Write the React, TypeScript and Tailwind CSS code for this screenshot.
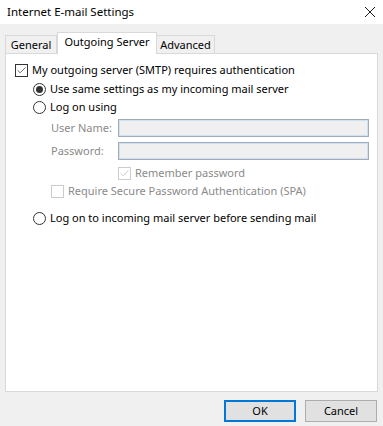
import { Check } from "lucide-react"

function CheckBox({ checked, disabled }: { checked?: boolean; disabled?: boolean }) {
  return (
    <span
      className={`flex h-[13px] w-[13px] shrink-0 items-center justify-center border bg-white ${
        disabled ? "border-[#cccccc]" : "border-[#333333]"
      }`}
    >
      {checked && (
        <Check
          className={`h-[11px] w-[11px] ${disabled ? "text-[#bcbcbc]" : "text-[#333333]"}`}
          strokeWidth={1.6}
        />
      )}
    </span>
  )
}

function Radio({ checked }: { checked?: boolean }) {
  return (
    <span className="flex h-[13px] w-[13px] shrink-0 items-center justify-center rounded-full border border-[#333333] bg-white">
      {checked && <span className="h-[7px] w-[7px] rounded-full bg-[#333333]" />}
    </span>
  )
}

export default function App() {
  return (
    <div
      className="flex h-[426px] w-[383px] flex-col bg-[#f0f0f0] text-[11px] text-black"
      style={{ fontFamily: "'Noto Sans', 'Open Sans', sans-serif" }}
    >
      {/* title bar */}
      <div className="flex h-[24px] items-center justify-between bg-white pl-[7px] pr-[6px]">
        <span className="text-[11.5px] leading-none">Internet E-mail Settings</span>
        <svg width="12" height="12" viewBox="0 0 12 12" className="mr-[1px]">
          <path d="M1 1 L11 11 M11 1 L1 11" stroke="#1a1a1a" strokeWidth="1" />
        </svg>
      </div>

      {/* tabs */}
      <div className="mt-[8px] flex h-[21px] items-end pl-[5px]">
        <div className="flex h-[18px] w-[52px] items-center justify-center border border-b-0 border-[#d9d9d9] bg-[#f0f0f0] pt-[1px]">
          General
        </div>
        <div className="relative z-10 -mb-px flex h-[22px] w-[100px] items-center justify-center border border-b-0 border-[#d9d9d9] bg-white pb-[2px]">
          Outgoing Server
        </div>
        <div className="flex h-[18px] w-[58px] items-center justify-center border border-b-0 border-l-0 border-[#d9d9d9] bg-[#f0f0f0] pt-[1px]">
          Advanced
        </div>
      </div>

      {/* panel */}
      <div className="mx-[5px] h-[339px] border border-[#d9d9d9] bg-white pt-[9px] pl-[9px] pr-[8px]">
        <div className="flex h-[14px] items-center gap-[4px]">
          <CheckBox checked />
          <span>My outgoing server (SMTP) requires authentication</span>
        </div>

        <div className="mt-[5px] flex h-[14px] items-center gap-[4px] pl-[18px]">
          <Radio checked />
          <span>Use same settings as my incoming mail server</span>
        </div>

        <div className="mt-[4px] flex h-[14px] items-center gap-[4px] pl-[18px]">
          <Radio />
          <span>Log on using</span>
        </div>

        <div className="mt-[5px] grid grid-cols-[67px_1fr] items-center gap-y-[5px] pl-[36px]">
          <span className="text-[#8a8a8a]">User Name:</span>
          <div className="h-[18px] border border-[#a4abb8] bg-[#f0f0f0] shadow-[inset_0_0_0_1px_#cfe0f3]" />
          <span className="text-[#8a8a8a]">Password:</span>
          <div className="h-[18px] border border-[#a4abb8] bg-[#f0f0f0] shadow-[inset_0_0_0_1px_#cfe0f3]" />
        </div>

        <div className="mt-[6px] flex h-[14px] items-center gap-[4px] pl-[103px] text-[#8a8a8a]">
          <CheckBox checked disabled />
          <span>Remember password</span>
        </div>

        <div className="mt-[4px] flex h-[14px] items-center gap-[4px] pl-[36px] text-[#8a8a8a]">
          <CheckBox disabled />
          <span>Require Secure Password Authentication (SPA)</span>
        </div>

        <div className="mt-[13px] flex h-[14px] items-center gap-[4px] pl-[18px]">
          <Radio />
          <span>Log on to incoming mail server before sending mail</span>
        </div>
      </div>

      {/* buttons */}
      <div className="mt-[8px] flex justify-end gap-[9px] pr-[6px]">
        <button className="flex h-[22px] w-[72px] items-center justify-center border-2 border-[#0078d7] bg-[#e1e1e1]">
          OK
        </button>
        <button className="flex h-[22px] w-[72px] items-center justify-center border border-[#adadad] bg-[#e1e1e1]">
          Cancel
        </button>
      </div>
    </div>
  )
}
